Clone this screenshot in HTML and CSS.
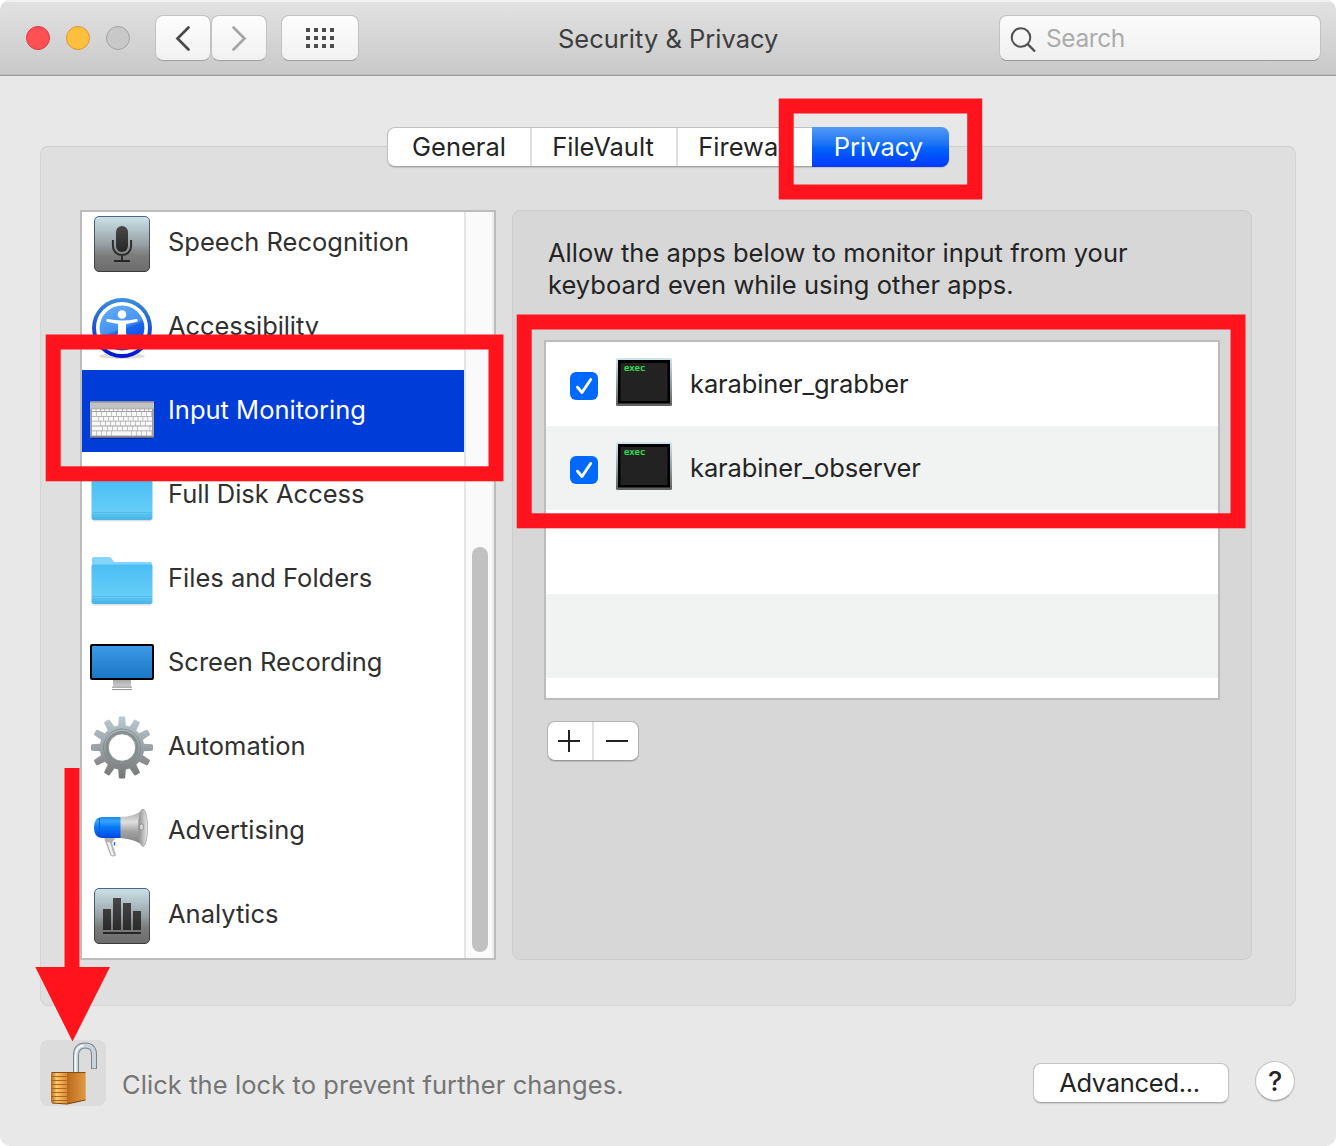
FILE: index.html
```html
<!DOCTYPE html>
<html lang="en">
<head>
<meta charset="utf-8">
<title>Security &amp; Privacy</title>
<link rel="stylesheet" href="styles.css">
</head>
<body>
<svg class="defs" width="0" height="0" aria-hidden="true">
  <defs>
    <linearGradient id="tile" x1="0" y1="0" x2="0" y2="1"><stop offset="0" stop-color="#cbe2e9"/><stop offset=".5" stop-color="#98a1a5"/><stop offset=".7" stop-color="#7c7c7c"/><stop offset="1" stop-color="#6c6c6c"/></linearGradient>
    <linearGradient id="tileEdge" x1="0" y1="0" x2="0" y2="1"><stop offset="0" stop-color="#4c6680"/><stop offset="1" stop-color="#3c3c3c"/></linearGradient>
    <linearGradient id="dark" x1="0" y1="0" x2="0" y2="1"><stop offset="0" stop-color="#484848"/><stop offset="1" stop-color="#262626"/></linearGradient>
    <linearGradient id="accRim" x1="0" y1="0" x2="0" y2="1"><stop offset="0" stop-color="#3d8fdc"/><stop offset=".5" stop-color="#1c55cf"/><stop offset="1" stop-color="#0013cf"/></linearGradient>
    <linearGradient id="accFill" x1=".3" y1="0" x2=".7" y2="1"><stop offset="0" stop-color="#63acf5"/><stop offset=".48" stop-color="#4792f0"/><stop offset=".55" stop-color="#1a66ea"/><stop offset="1" stop-color="#0a3de0"/></linearGradient>
    <linearGradient id="folder" x1="0" y1="0" x2="0" y2="1"><stop offset="0" stop-color="#4bbef3"/><stop offset=".8" stop-color="#66cdf8"/><stop offset="1" stop-color="#4ab4e6"/></linearGradient>
    <linearGradient id="screen" x1="0" y1="0" x2="0" y2="1"><stop offset="0" stop-color="#3d9bea"/><stop offset="1" stop-color="#1b76c4"/></linearGradient>
    <linearGradient id="stand" x1="0" y1="0" x2="0" y2="1"><stop offset="0" stop-color="#a5a5a5"/><stop offset="1" stop-color="#cfcfcf"/></linearGradient>
    <linearGradient id="gear" gradientUnits="userSpaceOnUse" x1="0" y1="0" x2="0" y2="63"><stop offset="0" stop-color="#b9cbd3"/><stop offset=".5" stop-color="#9ba2a5"/><stop offset="1" stop-color="#757575"/></linearGradient>
    <clipPath id="gearShape">
      <path id="tooth" d="M28 12 28.800 1.500q.2-1 1.200-1h4q1 0 1.200 1L36 12v39l-.8 10.500q-.2 1-1.200 1h-4q-1 0-1.200-1L28 51z"/>
      <use href="#tooth" transform="rotate(30 32 31.500)"/><use href="#tooth" transform="rotate(60 32 31.500)"/><use href="#tooth" transform="rotate(90 32 31.500)"/><use href="#tooth" transform="rotate(120 32 31.500)"/><use href="#tooth" transform="rotate(150 32 31.500)"/>
      <circle cx="32" cy="31.500" r="22.300"/>
    </clipPath>
    <linearGradient id="hornBlue" x1="0" y1="0" x2="0" y2="1"><stop offset="0" stop-color="#1f86e8"/><stop offset=".2" stop-color="#36a6ff"/><stop offset=".45" stop-color="#0a7df5"/><stop offset=".75" stop-color="#0060f5"/><stop offset="1" stop-color="#0048d8"/></linearGradient>
    <linearGradient id="horn" x1="0" y1="0" x2="0" y2="1"><stop offset="0" stop-color="#9a9a9a"/><stop offset=".35" stop-color="#e0e0e0"/><stop offset=".6" stop-color="#a4a4a4"/><stop offset="1" stop-color="#7c7c7c"/></linearGradient>
    <linearGradient id="mouth" x1="0" y1="0" x2="1" y2="0"><stop offset="0" stop-color="#8b8b8b"/><stop offset="1" stop-color="#ececec"/></linearGradient>
    <linearGradient id="brassL" x1="0" y1="0" x2="1" y2="0"><stop offset="0" stop-color="#b0661b"/><stop offset=".35" stop-color="#ffc76a"/><stop offset="1" stop-color="#d98a35"/></linearGradient>
    <linearGradient id="brassR" x1="0" y1="0" x2="1" y2="0"><stop offset="0" stop-color="#b96a1c"/><stop offset="1" stop-color="#e09a42"/></linearGradient>
    <linearGradient id="exec" x1="0" y1="0" x2="0" y2="1"><stop offset="0" stop-color="#cfe7ee"/><stop offset="1" stop-color="#606060"/></linearGradient>
    <symbol id="folderIcon" viewBox="0 0 64 64">
      <path d="M2 55V11q0-2 2-2h15q2 0 3 2l2 3h36q2 0 2 2v39z" fill="#83d5fb"/>
      <path d="M3 56.800h58" stroke="#c9d3d8"/>
      <path d="M1.500 18q0-1.500 1.500-1.500h58q1.500 0 1.500 1.500v36q0 2-2 2h-57q-2 0-2-2z" fill="url(#folder)"/>
      <path d="M2 48.500h60M2 51h60M2 53.500h60" stroke="#43afe2" stroke-width=".7" opacity=".7"/>
    </symbol>
  </defs>
</svg>

<div class="window">
  <header class="titlebar">
    <div class="lights"><i class="light close"></i><i class="light minimise"></i><i class="light zoom"></i></div>
    <div class="nav">
      <button class="tool" aria-label="Back"><svg width="54" height="44" viewBox="0 0 54 44"><path d="M32.500 11.500 21.500 22.500l11 11" fill="none" stroke="#484848" stroke-width="2.700" stroke-linecap="round" stroke-linejoin="miter"/></svg></button>
      <button class="tool" aria-label="Forward"><svg width="54" height="44" viewBox="0 0 54 44"><path d="M21.500 11.500l11 11-11 11" fill="none" stroke="#a5a5a5" stroke-width="2.700" stroke-linecap="round"/></svg></button>
    </div>
    <button class="tool wide" aria-label="Show all"><svg width="28" height="20" viewBox="0 0 28 20" fill="#4b4b4b"><path d="M0 0h4v4H0zM8 0h4v4H8zM16 0h4v4h-4zM24 0h4v4h-4zM0 8h4v4H0zM8 8h4v4H8zM16 8h4v4h-4zM24 8h4v4h-4zM0 16h4v4H0zM8 16h4v4H8zM16 16h4v4h-4zM24 16h4v4h-4z"/></svg></button>
    <h1 class="title">Security &amp; Privacy</h1>
    <div class="search"><svg width="26" height="26" viewBox="0 0 26 26" fill="none" stroke="#505050" stroke-width="2"><circle cx="11" cy="10.500" r="9.300"/><path d="M17.700 17.200 25 24.500" stroke-width="2.400"/></svg><span>Search</span></div>
  </header>

  <main class="content">
    <nav class="tabs">
      <span class="tab general">General</span><span class="tab filevault">FileVault</span><span class="tab firewall">Firewall</span><span class="tab privacy">Privacy</span>
    </nav>
    <section class="panel">
      <div class="sidebar">
        <ul class="services">
          <li><svg class="icon" viewBox="0 0 64 64"><rect x="4.500" y="4.500" width="55" height="55" rx="4.500" fill="url(#tile)" stroke="url(#tileEdge)"/><rect x="26" y="14" width="12" height="26" rx="6" fill="url(#dark)"/><path d="M22.900 28v6a9.100 9.100 0 0 0 18.200 0v-6M32 43v6" fill="none" stroke="#2d2d2d" stroke-width="2"/><path d="M24 49h16" stroke="#262626" stroke-width="2"/></svg><span>Speech Recognition</span></li>
          <li><svg class="icon" viewBox="0 0 64 64"><ellipse cx="32" cy="60" rx="23" ry="3" fill="#ddd"/><circle cx="32" cy="32" r="30" fill="url(#accRim)"/><circle cx="32" cy="32" r="24.200" fill="url(#accFill)" stroke="#fff" stroke-width="3.600"/><g fill="#fff"><circle cx="32" cy="18.500" r="4.300"/><path d="M17.500 23q-1.500.2-1.300 1.600 0 1.200 1.500 1.500l10.300 2v9L23.500 50q-.6 2 1 2.500 1.600.4 2.400-1.400L32 39.500l5.100 11.600q.8 1.800 2.400 1.400 1.600-.5 1-2.500L36 37v-9l10.300-2q1.500-.3 1.500-1.500.2-1.400-1.300-1.600Q32 26 17.500 23z"/></g></svg><span class="accessibility">Accessibility</span></li>
          <li class="selected"><svg class="icon" viewBox="0 0 64 64"><rect x="2" y="56" width="60" height="3" rx="1.500" fill="#002ba5"/><rect x="0" y="21.500" width="64" height="36" rx="1" fill="#a2a2a2"/><rect x="0" y="21.500" width="64" height="7" fill="#c2c2c2"/><path d="M0 22h64" stroke="#888"/><g fill="none" stroke="#f8f8f8"><path d="M2 30.200h60" stroke-width="1.800" stroke-dasharray="3.600 .8"/><path d="M2 34h60" stroke-width="4" stroke-dasharray="4.400 .6"/><path d="M2 38.800h60" stroke-width="4" stroke-dasharray="6.500 .6 4.300 .6 4.300 .6 4.300 .6 4.300 .6 4.300 .6 4.300 .6 4.300 .6 4.300 .6 4.300 .6 4.300 .6 7 .6"/><path d="M2 43.600h60" stroke-width="4" stroke-dasharray="8 .6 4.400 .6 4.400 .6 4.400 .6 4.400 .6 4.400 .6 4.400 .6 4.400 .6 4.400 .6 4.400 .6"/><path d="M2 48.400h60" stroke-width="4" stroke-dasharray="10 .6 4.400 .6 4.400 .6 4.400 .6 4.400 .6 4.400 .6 4.400 .6 4.400 .6 12 .6"/><path d="M2 53.400h60" stroke-width="4.400" stroke-dasharray="4.400 .6 4.400 .6 4.400 .6 4.400 .6 19 .6 4.400 .6 4.400 .6 4.400 .6 5 .6"/></g><path d="M0 57h64" stroke="#777"/></svg><span>Input Monitoring</span></li>
          <li><svg class="icon"><use href="#folderIcon"/></svg><span>Full Disk Access</span></li>
          <li><svg class="icon"><use href="#folderIcon"/></svg><span>Files and Folders</span></li>
          <li><svg class="icon" viewBox="0 0 64 64"><path d="M23 47h18v8H23z" fill="url(#stand)"/><path d="M22 55.200h20M22 57.600h20" stroke="#909090" stroke-width="1"/><rect x="1" y="13" width="62" height="34" rx="1" fill="url(#screen)" stroke="#000" stroke-width="2"/></svg><span>Screen Recording</span></li>
          <li><svg class="icon" viewBox="0 0 64 64"><path d="M0 0h64v64H0z" fill="url(#gear)" clip-path="url(#gearShape)"/><circle cx="32" cy="31.500" r="18.500" fill="none" stroke="#7d8487" stroke-width=".8"/><circle cx="32" cy="31.500" r="15.300" fill="none" stroke="#868d8f" stroke-width="2.500"/><circle cx="32" cy="31.500" r="13.700" fill="#fff" stroke="#787e80" stroke-width=".8"/></svg><span>Automation</span></li>
          <li><svg class="icon" viewBox="0 0 64 64"><path d="M14 37h11.500q0 2-2.500 4l-1 2 4 12q-.5 1.500-3.500 1.500-1.800 0-2.500-2L15 41z" fill="#b4b4b4"/><path d="M17 42l4.500 13 2.500.5-4-13z" fill="#f2f2f2"/><path d="M24.500 42v3.500" stroke="#1478ee" stroke-width="1.500"/><path d="M12 17h19v21H12q-8 0-8-10.500T12 17z" fill="url(#hornBlue)"/><path d="M9.500 18v19" stroke="#0a4fb5" stroke-width=".8"/><path d="M30.500 17q13.500 0 23.500-8 3 19 0 37-9-7-23.500-8z" fill="url(#horn)"/><ellipse cx="53" cy="27.800" rx="4.600" ry="18.700" fill="url(#mouth)" stroke="#9d9d9d" stroke-width=".7"/><ellipse cx="51.500" cy="27" rx="2.200" ry="3" fill="#d7d7d7" stroke="#777" stroke-width=".6"/></svg><span>Advertising</span></li>
          <li><svg class="icon" viewBox="0 0 64 64"><rect x="4.500" y="4.500" width="55" height="55" rx="4.500" fill="url(#tile)" stroke="url(#tileEdge)"/><path d="M13 25h8v21h-8zM23 14h8v32h-8zM33 19h8v27h-8zM43 27h8v19h-8zM13 48h38v2H13z" fill="url(#dark)"/></svg><span>Analytics</span></li>
        </ul>
        <div class="track"><div class="thumb"></div></div>
      </div>

      <div class="detail">
        <p class="prompt">Allow the apps below to monitor input from your<br>keyboard even while using other apps.</p>
        <ul class="apps">
          <li><span class="check"><svg width="28" height="28" viewBox="0 0 28 28"><path d="M7.500 15.200 12 20.500 20.700 7.500" fill="none" stroke="#fff" stroke-width="2.900" stroke-linecap="round" stroke-linejoin="round"/></svg></span><svg class="exec" width="56" height="50" viewBox="0 0 56 50"><rect x="0" y="1" width="56" height="48" rx="1.500" fill="url(#exec)"/><path d="M2 3h52V46.500H2z" fill="#000"/><path d="M4.500 6h47v38h-47z" fill="#222"/><text x="8" y="13.500">exec</text></svg><span class="name">karabiner_grabber</span></li>
          <li><span class="check"><svg width="28" height="28" viewBox="0 0 28 28"><path d="M7.500 15.200 12 20.500 20.700 7.500" fill="none" stroke="#fff" stroke-width="2.900" stroke-linecap="round" stroke-linejoin="round"/></svg></span><svg class="exec" width="56" height="50" viewBox="0 0 56 50"><rect x="0" y="1" width="56" height="48" rx="1.500" fill="url(#exec)"/><path d="M2 3h52V46.500H2z" fill="#000"/><path d="M4.500 6h47v38h-47z" fill="#222"/><text x="8" y="13.500">exec</text></svg><span class="name">karabiner_observer</span></li>
          <li></li><li></li><li></li>
        </ul>
        <div class="stepper">
          <button aria-label="Add"><svg width="22" height="22" viewBox="0 0 22 22"><path d="M0 11h22M11 0v22" stroke="#222" stroke-width="2"/></svg></button>
          <button aria-label="Remove"><svg width="22" height="22" viewBox="0 0 22 22"><path d="M0 11h22" stroke="#222" stroke-width="2"/></svg></button>
        </div>
      </div>
    </section>

    <footer class="footer">
      <div class="lock"><svg width="66" height="66" viewBox="0 0 66 66"><path d="M36 34V16q0-10.500 9.300-10.500T54 16v13" fill="none" stroke="#78838b" stroke-width="6"/><path d="M36 34V16q0-10.500 9.300-10.500T54 16v12.300" fill="none" stroke="#c9d3da" stroke-width="4"/><path d="M35.500 34V16q0-9.500 8-10.500" fill="none" stroke="#fff" stroke-width="1.500"/><path d="M11 33l16-1v32l-14-1q-2 0-2-2z" fill="url(#brassL)"/><path d="M27 32h17q1.700 0 1.700 1.500V60L27 64z" fill="url(#brassR)"/><path d="M11 36.500h16M11 40.500h16M11 44.500h16M11 48.500h16M11 52.500h16M11 56.500h16M11 60.500h16" stroke="#ad651b" stroke-width="1.100"/><path d="M11.500 32.500h34" stroke="#8a4d12" stroke-width="1"/><path d="M12 63l15 1 18.500-4" fill="none" stroke="#7d420c" stroke-width="1.200"/></svg></div>
      <span class="hint">Click the lock to prevent further changes.</span>
      <button class="advanced">Advanced...</button>
      <button class="help">?</button>
    </footer>
  </main>

  <svg class="marks" width="1336" height="1146" viewBox="0 0 1336 1146">
    <g fill="none" stroke="#ff141e" stroke-width="15"><rect x="786.200" y="106" width="188.500" height="86"/><rect x="53.200" y="342" width="442.800" height="131.800"/><rect x="524.200" y="322" width="713.800" height="198.800"/></g>
    <path d="M64.500 768h15v199H110L72.500 1041.500 35.300 967h29.200z" fill="#ff141e"/>
  </svg>
</div>
</body>
</html>
```
FILE: styles.css
```css
* { box-sizing: border-box; }
body { margin: 0; background: #fff; font-family: Inter, "Liberation Sans", sans-serif; font-size: 25.5px; color: #242424; }
ul { list-style: none; margin: 0; padding: 0; }
button { font: inherit; color: inherit; padding: 0; border: 0; }
svg { display: block; flex: none; }
.defs { position: absolute; }

.window { position: relative; display: flex; flex-direction: column; width: 1336px; height: 1146px; overflow: hidden; border-radius: 10px; background: #e8e8e8; white-space: nowrap; }
.titlebar { display: flex; align-items: flex-start; flex: none; height: 76px; padding: 15px 15px 0 26px; background: linear-gradient(#e2e2e2, #c9c9c9); border-bottom: 1px solid #9d9d9d; box-shadow: inset 0 2px 0 #f0f0f0, inset 0 -1px 0 #bababa; }
.lights { display: flex; gap: 16px; margin: 11px 25px 0 0; }
.light { width: 24px; height: 24px; border-radius: 50%; border: 1px solid; }
.close { background: #ff5053; border-color: #e2383f; }
.minimise { background: #ffc03d; border-color: #dd9339; }
.zoom { background: #c8c8c8; border-color: #a3a3a3; }
.nav { display: flex; margin-right: 14px; }
.tool { display: flex; align-items: center; justify-content: center; width: 56px; height: 46px; background: linear-gradient(#fdfdfd, #f1f1f1); border: 1px solid #c2c2c2; border-bottom-color: #a0a0a0; border-radius: 8px; }
.wide { width: 78px; }
.title { width: 220px; margin: 8px 0 0 199px; font-size: 25.5px; line-height: 32px; font-weight: 400; color: #3d3d3d; }
.search { display: flex; align-items: center; gap: 10px; width: 322px; height: 46px; margin-left: auto; padding: 0 10px; background: linear-gradient(#fbfbfb, #f0f0f0); border: 1px solid #c2c2c2; border-bottom-color: #999; border-radius: 8px; color: #acacac; }
.search svg { margin-top: 3px; }
.search span { padding-bottom: 1px; font-size: 24.5px; letter-spacing: -.4px; }

.content { display: flex; flex-direction: column; flex: 1; padding: 51px 40px 0; }
.tabs { display: flex; z-index: 1; align-self: center; width: 562px; height: 40px; border: 1px solid #c2c2c2; border-bottom-color: #a5a5a5; border-radius: 8px; background: #fff; box-shadow: 0 1px 1px #0002; }
.tab { display: flex; align-items: center; justify-content: center; padding-bottom: 2px; border-right: 2px solid #e0e0e0; }
.general { width: 144px; }
.filevault { width: 146px; padding-right: 2px; }
.firewall { width: 135px; padding-right: 2px; border: 0; }
.privacy { flex: 1; margin: -1px; padding-right: 4px; border: 0; border-radius: 0 8px 8px 0; background: linear-gradient(#539af6, #1a70f4 45%, #0364fa 52%, #0038ff); color: #fff; }

.panel { display: flex; gap: 16px; height: 860px; margin-top: -21px; padding: 63px 43px 45px 39px; border: 1px solid #d4d4d4; border-top-color: #cdcdcd; border-radius: 8px; background: #dfdfdf; }
.sidebar { display: flex; width: 416px; height: 750px; border: 2px solid #bcbcbc; background: #fff; overflow: hidden; color: #303030; }
.services { display: flex; flex-direction: column; justify-content: flex-end; width: 382px; height: 746px; }
.services li { display: flex; flex: none; align-items: center; gap: 14px; height: 82px; margin-bottom: 2px; padding: 2px 0 0 8px; }
.services span { padding-bottom: 6px; }
.accessibility { letter-spacing: -.08px; }
.services .selected { background: #003dd8; color: #fff; }
.icon { width: 64px; height: 64px; }
.track { flex: 1; padding: 335px 4px 6px 6px; border-left: 2px solid #e5e5e5; border-right: 2px solid #ededed; background: #fafafa; }
.thumb { width: 16px; height: 405px; border-radius: 8px; background: #c1c1c1; }

.detail { flex: 1; height: 750px; padding: 26px 31px; border: 1px solid #cdcdcd; border-radius: 8px; background: #d7d7d7; }
.prompt { margin: 0 0 39px 4px; line-height: 32px; letter-spacing: .03px; }
.apps { width: 676px; height: 360px; overflow: hidden; border: 2px solid #bcbcbc; background: #fff; }
.apps li { display: flex; align-items: center; height: 84px; padding-left: 24px; }
.apps li:nth-child(even) { background: #f1f3f3; }
.check { width: 28px; height: 28px; margin: 4px 18px 0 0; border-radius: 6px; background: #0068fb; }
.exec { margin: -5px 18px 0 0; }
.exec text { font: 8.8px "DejaVu Sans Mono", monospace; fill: #36f35c; stroke: #36f35c; stroke-width: .2px; }
.name { padding-bottom: 2px; letter-spacing: -.11px; }
.stepper { display: flex; width: 92px; height: 40px; margin: 21px 0 0 3px; border: 1px solid #b4b4b4; border-bottom-color: #999; border-radius: 8px; background: #fff; box-shadow: 0 1px 1px #0002; }
.stepper button { display: flex; align-items: center; justify-content: center; width: 44px; padding-left: 2px; background: none; }
.stepper button:first-child { width: 46px; padding: 0 2px 0 0; border-right: 2px solid #e0e0e0; }

.footer { display: flex; align-items: flex-start; margin-top: 34px; }
.lock { width: 66px; height: 66px; border-radius: 8px; background: #dcdcdc; }
.hint { margin: 29px 0 0 16px; line-height: 32px; letter-spacing: .08px; color: #757575; }
.advanced, .help { border: 1px solid #c4c4c4; border-bottom-color: #a9a9a9; background: #fff; box-shadow: 0 1px 1px #0002; }
.advanced { width: 196px; height: 40px; margin: 23px 26px 0 auto; padding: 0 3px 2px 0; border-radius: 8px; letter-spacing: -.3px; }
.help { width: 40px; height: 40px; margin: 21px 1px 0 0; border-radius: 50%; font-size: 27px; font-weight: 500; }

.marks { position: absolute; inset: 0; z-index: 2; pointer-events: none; }
```
